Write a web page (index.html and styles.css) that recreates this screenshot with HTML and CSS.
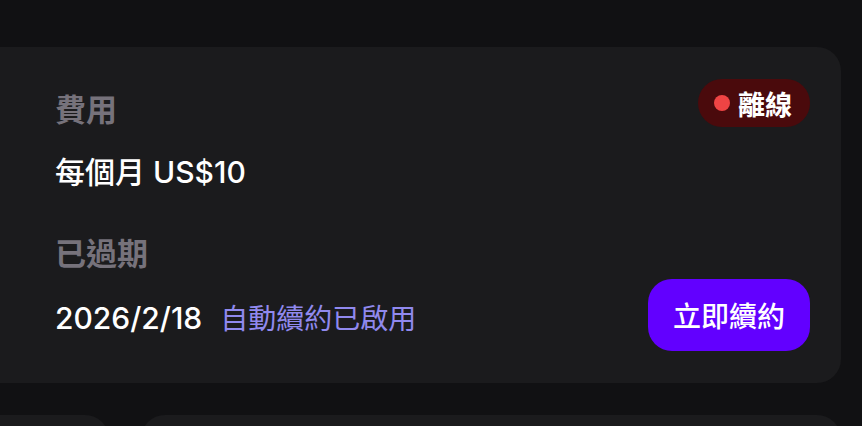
FILE: index.html
```html
<!DOCTYPE html>
<html lang="zh-Hant">
<head>
    <meta charset="UTF-8">
    <meta name="viewport" content="width=device-width, initial-scale=1.0">
    <title>訂閱</title>
    <link rel="stylesheet" href="styles.css">
</head>
<body>
    <div class="page">
        <section class="card">
            <div class="info">
                <div class="label first">費用</div>
                <div class="value">每個月 US$10</div>
                <div class="label second">已過期</div>
                <div class="value date-row">
                    <span>2026/2/18</span>
                    <span class="auto-renew">自動續約已啟用</span>
                </div>
            </div>
            <div class="side">
                <div class="status">
                    <span class="dot"></span>
                    <span>離線</span>
                </div>
                <button type="button" class="renew">立即續約</button>
            </div>
        </section>

        <div class="row">
            <div class="tile small"></div>
            <div class="tile wide"></div>
        </div>
    </div>
</body>
</html>
```

FILE: styles.css
```css
body {
    margin: 0;
    background-color: #111113;
    font-family: "Inter", "Noto Sans CJK TC", sans-serif;
    color: #ffffff;
    overflow: hidden;
}
.page {
    display: flex;
    flex-direction: column;
    gap: 32px;
    margin: 0 21px 0 -24px;
    padding-top: 47px;
}
.card {
    display: grid;
    grid-template-columns: 1fr auto;
    background-color: #1b1b1d;
    border-radius: 24px;
    padding: 32px 31px 32px 79px;
}
.info {
    display: flex;
    flex-direction: column;
    padding-bottom: 8px;
}
.label {
    font-size: 31px;
    line-height: 48px;
    font-weight: 600;
    color: #76727b;
}
.label.first {
    margin-top: 7px;
}
.label.second {
    margin-top: 34px;
}
.value {
    font-size: 30px;
    line-height: 48px;
    font-weight: 500;
    margin-top: 14px;
}
.date-row {
    display: flex;
    align-items: baseline;
    gap: 18px;
    margin-top: 16px;
}
.auto-renew {
    font-size: 28px;
    font-weight: 400;
    color: #9089ee;
}
.side {
    display: flex;
    flex-direction: column;
    justify-content: space-between;
    align-items: flex-end;
}
.status {
    display: flex;
    align-items: center;
    gap: 8px;
    height: 48px;
    padding: 0 18px 0 16px;
    border-radius: 24px;
    background-color: #4a0a0c;
    font-size: 27px;
    font-weight: 700;
}
.dot {
    width: 16px;
    height: 16px;
    border-radius: 50%;
    background-color: #ef4444;
}
.renew {
    width: 162px;
    height: 72px;
    border: none;
    border-radius: 24px;
    background-color: #6200ff;
    color: #ffffff;
    font-family: inherit;
    font-size: 28px;
    font-weight: 500;
    cursor: pointer;
}
.row {
    display: flex;
    gap: 32px;
}
.tile {
    height: 90px;
    background-color: #1b1b1d;
    border-radius: 24px;
}
.tile.small {
    width: 133px;
}
.tile.wide {
    flex: 1;
}
```
